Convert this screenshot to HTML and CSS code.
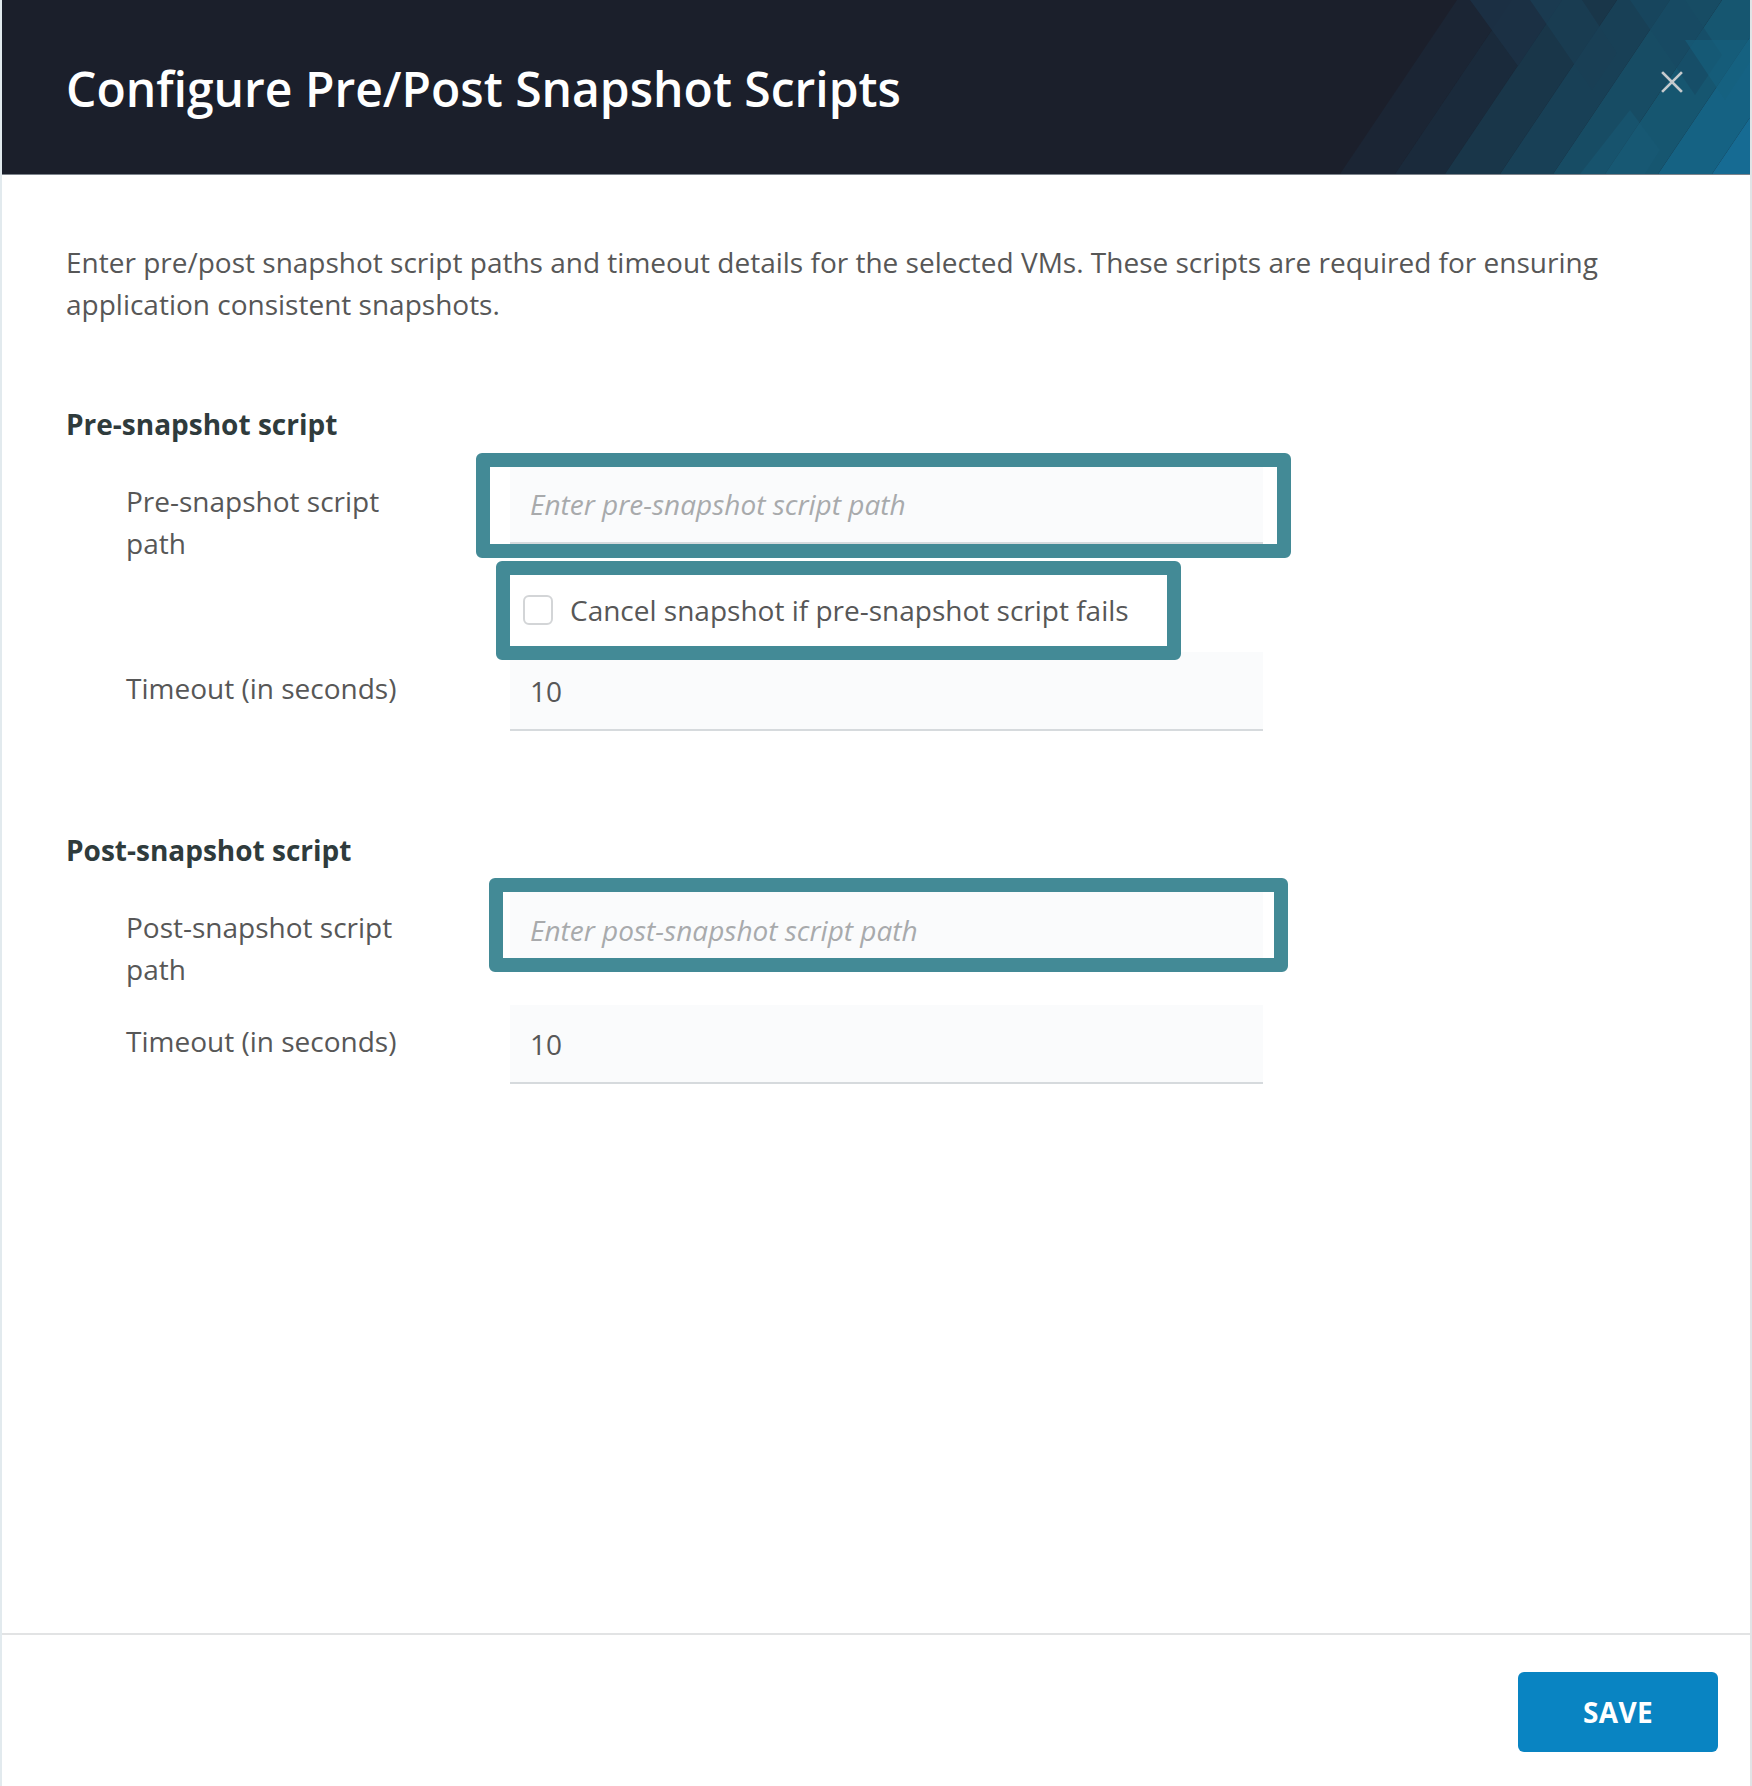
FILE: index.html
```html
<!DOCTYPE html>
<html lang="en">
<head>
<meta charset="utf-8">
<title>Configure Pre/Post Snapshot Scripts</title>
<link rel="stylesheet" href="styles.css">
</head>
<body>
<div class="modal">
  <header class="modal-header">
    <svg class="header-art" viewBox="0 0 450 174" width="450" height="174" preserveAspectRatio="none" aria-hidden="true">
      <polygon points="40,174 157,0 212,0 95,174" fill="#1b2534"/>
      <polygon points="95,174 212,0 262,0 145,174" fill="#1a2a3b"/>
      <polygon points="145,174 262,0 317,0 200,174" fill="#193649"/>
      <polygon points="200,174 317,0 370,0 253,174" fill="#184056"/>
      <polygon points="253,174 370,0 422,0 305,174" fill="#174c64"/>
      <polygon points="305,174 422,0 475,0 358,174" fill="#165670"/>
      <polygon points="358,174 475,0 529,0 412,174" fill="#156283"/>
      <polygon points="412,174 529,0 583,0 466,174" fill="#166b93"/>
      <polygon points="170,0 218,66 262,0" fill="#1c3247" opacity="0.8"/>
      <polygon points="230,0 292,90 317,53 282,0" fill="#1a3e55" opacity="0.7"/>
      <polygon points="330,0 395,95 422,55 385,0" fill="#184a62" opacity="0.6"/>
      <polygon points="385,40 425,100 450,62 450,40" fill="#15607f" opacity="0.6"/>
      <polygon points="280,174 330,110 360,150 345,174" fill="#185a76" opacity="0.5"/>
    </svg>
    <h1 class="modal-title">Configure Pre/Post Snapshot Scripts</h1>
    <button class="close-btn" type="button" aria-label="Close">
      <svg viewBox="0 0 22 22" width="22" height="22"><path d="M2 2 L20 20 M20 2 L2 20" stroke="#c6cacd" stroke-width="2.6" stroke-linecap="square" fill="none"/></svg>
    </button>
  </header>

  <main class="modal-body">
    <p class="intro">Enter pre/post snapshot script paths and timeout details for the selected VMs. These scripts are required for ensuring application consistent snapshots.</p>

    <section class="section section-pre">
      <h2 class="section-title">Pre-snapshot script</h2>
      <div class="row row-first">
        <label class="row-label" for="pre-path">Pre-snapshot script path</label>
        <div class="field hl-pre">
          <input id="pre-path" class="text-input" type="text" placeholder="Enter pre-snapshot script path">
        </div>
      </div>
      <div class="row row-check">
        <span class="row-label"></span>
        <label class="check-row">
          <span class="checkbox"></span>
          <span class="check-text">Cancel snapshot if pre-snapshot script fails</span>
        </label>
      </div>
      <div class="row row-timeout-pre">
        <label class="row-label" for="pre-timeout">Timeout (in seconds)</label>
        <div class="field">
          <input id="pre-timeout" class="text-input" type="text" value="10">
        </div>
      </div>
    </section>

    <section class="section section-post">
      <h2 class="section-title">Post-snapshot script</h2>
      <div class="row row-first">
        <label class="row-label" for="post-path">Post-snapshot script path</label>
        <div class="field hl-post">
          <input id="post-path" class="text-input" type="text" placeholder="Enter post-snapshot script path">
        </div>
      </div>
      <div class="row row-timeout-post">
        <label class="row-label" for="post-timeout">Timeout (in seconds)</label>
        <div class="field">
          <input id="post-timeout" class="text-input" type="text" value="10">
        </div>
      </div>
    </section>
  </main>

  <footer class="modal-footer">
    <button class="save-btn" type="button">SAVE</button>
  </footer>
</div>
</body>
</html>
```

FILE: styles.css
```css
* { box-sizing: border-box; }

html, body {
  margin: 0;
  padding: 0;
  background: #ffffff;
}

body {
  font-family: "Open Sans", "Noto Sans", sans-serif;
  color: #565656;
}

.modal {
  width: 1752px;
  height: 1786px;
  display: flex;
  flex-direction: column;
  border-left: 2px solid #e2eaee;
  border-right: 2px solid #e1e4e6;
  background: #ffffff;
}

.modal-header {
  position: relative;
  height: 175px;
  flex: none;
  display: flex;
  align-items: center;
  padding: 0 67px 0 64px;
  background: #1b1f2b;
  border-bottom: 1px solid #7d848c;
  overflow: hidden;
}

.header-art {
  position: absolute;
  right: 0;
  top: 0;
  height: 174px;
  width: 450px;
}

.modal-title {
  position: relative;
  margin: 0;
  padding-top: 2px;
  font-size: 48px;
  font-weight: 600;
  color: #ffffff;
  letter-spacing: 0;
  flex: 1;
}

.close-btn {
  position: relative;
  width: 22px;
  height: 22px;
  padding: 0;
  margin-bottom: 10px;
  border: none;
  background: transparent;
  display: flex;
}

.modal-body {
  flex: 1;
  padding: 66px 64px 0 64px;
}

.intro {
  margin: 0;
  font-size: 28px;
  line-height: 42px;
  color: #575757;
}

.section-title {
  margin: 0;
  font-size: 28px;
  line-height: 42px;
  font-weight: 700;
  color: #2f3b3c;
}

.section-pre { margin-top: 78px; }
.section-post { margin-top: 98px; }

.row {
  display: grid;
  grid-template-columns: 384px 753px;
  grid-template-rows: 79px;
  align-items: start;
  margin-left: 60px;
}

.row-check { grid-template-rows: 72px; }

.row-first { margin-top: 20px; }
.row-check { margin-top: 30px; }
.row-timeout-pre { margin-top: 6px; }
.row-timeout-post { margin-top: 35px; }

.row-label {
  display: block;
  width: 300px;
  padding-top: 15px;
  font-size: 28px;
  line-height: 42px;
  color: #575757;
}

.field {
  position: relative;
  height: 79px;
}

.text-input {
  display: block;
  width: 100%;
  height: 79px;
  padding: 0 20px;
  border: none;
  border-bottom: 2px solid #d6dadd;
  background: #fafbfc;
  font-family: "Open Sans", "Noto Sans", sans-serif;
  font-size: 28px;
  color: #575757;
  outline: none;
}

.text-input::placeholder {
  font-style: italic;
  color: #a8aaac;
}

.hl-pre::after,
.hl-post::after,
.check-row::after {
  content: "";
  position: absolute;
  border: 14px solid #438a96;
  border-radius: 6px;
  pointer-events: none;
}

.hl-pre::after {
  left: -34px;
  top: -12px;
  right: -28px;
  bottom: -14px;
}

.hl-post::after {
  left: -21px;
  top: -13px;
  right: -25px;
  bottom: -2px;
}

.check-row {
  position: relative;
  display: flex;
  align-items: center;
  gap: 17px;
  width: 657px;
  height: 72px;
  padding-left: 13px;
  background: #ffffff;
  z-index: 1;
}

.check-row::after {
  left: -14px;
  top: -13px;
  right: -14px;
  bottom: -14px;
}

.checkbox {
  width: 30px;
  height: 30px;
  flex: none;
  border: 2px solid #d3d5d7;
  border-radius: 6px;
  background: #ffffff;
}

.check-text {
  font-size: 28px;
  line-height: 42px;
  color: #575757;
  white-space: nowrap;
}

.modal-footer {
  flex: none;
  height: 153px;
  border-top: 2px solid #e2e3e4;
  display: flex;
  justify-content: flex-end;
  align-items: flex-start;
  padding: 37px 32px 0 0;
}

.save-btn {
  width: 200px;
  height: 80px;
  border: none;
  border-radius: 6px;
  background: #0984c2;
  color: #ffffff;
  font-family: "Open Sans", "Noto Sans", sans-serif;
  font-size: 28px;
  font-weight: 700;
  letter-spacing: 0.3px;
}
```
